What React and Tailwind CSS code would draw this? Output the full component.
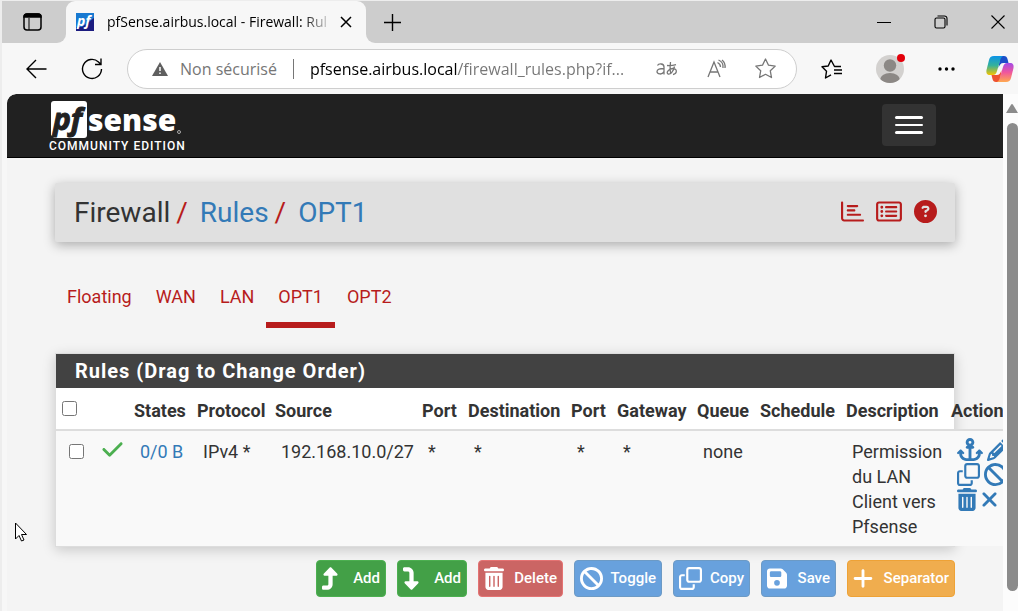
import {
  FaAnchor,
  FaBan,
  FaCheck,
  FaCircleQuestion,
  FaFloppyDisk,
  FaPencil,
  FaPlus,
  FaRegChartBar,
  FaRegClone,
  FaRegRectangleList,
  FaTrashCan,
  FaTurnDown,
  FaTurnUp,
  FaXmark,
} from 'react-icons/fa6'

const TABS = ['Floating', 'WAN', 'LAN', 'OPT1', 'OPT2']

const COLUMNS = [
  { label: 'States', width: 'w-[63px]' },
  { label: 'Protocol', width: 'w-[78px]' },
  { label: 'Source', width: 'w-[147px]' },
  { label: 'Port', width: 'w-[46px]' },
  { label: 'Destination', width: 'w-[103px]' },
  { label: 'Port', width: 'w-[46px]' },
  { label: 'Gateway', width: 'w-[80px]' },
  { label: 'Queue', width: 'w-[63px]' },
  { label: 'Schedule', width: 'w-[86px]' },
  { label: 'Description', width: 'w-[105px]' },
  { label: 'Actions', width: 'w-[72px]' },
]

const RULES = [
  {
    states: '0/0 B',
    cells: ['IPv4 *', '192.168.10.0/27', '*', '*', '*', '*', 'none', '', 'Permission du LAN Client vers Pfsense'],
  },
]

const ROW_ACTIONS = [
  { label: 'Add associated rule', Icon: FaAnchor, size: 'h-[23px] w-[26px]' },
  { label: 'Edit', Icon: FaPencil, size: 'h-[23px] w-[23px]' },
  { label: 'Copy', Icon: FaRegClone, size: 'h-[23px] w-[23px]' },
  { label: 'Disable', Icon: FaBan, size: 'h-[23px] w-[23px]' },
  { label: 'Delete', Icon: FaTrashCan, size: 'h-[23px] w-5' },
  { label: 'Reset states', Icon: FaXmark, size: 'h-[23px] w-[17px]' },
]

const GREEN = 'bg-[#43a047] border-[#4caf50]'
const RED = 'bg-[#cb6564] border-[#e57373]'
const BLUE = 'bg-[#68a1dd] border-[#6c9ac5]'
const ORANGE = 'bg-[#f0ad4e] border-[#eea236]'

const BUTTONS = [
  { label: 'Add', Icon: FaTurnUp, size: 'h-[23px] w-[17px]', width: 'w-[70px]', color: GREEN },
  { label: 'Add', Icon: FaTurnDown, size: 'h-[23px] w-[17px]', width: 'w-[70px]', color: GREEN },
  { label: 'Delete', Icon: FaTrashCan, size: 'h-[23px] w-5', width: 'w-[85px]', color: RED },
  { label: 'Toggle', Icon: FaBan, size: 'h-[23px] w-[23px]', width: 'w-[88px]', color: BLUE },
  { label: 'Copy', Icon: FaRegClone, size: 'h-[23px] w-[23px]', width: 'w-[77px]', color: BLUE },
  { label: 'Save', Icon: FaFloppyDisk, size: 'h-[23px] w-5', width: 'w-[75px]', color: BLUE },
  { label: 'Separator', Icon: FaPlus, size: 'h-[23px] w-5', width: 'w-[108px]', color: ORANGE },
]

function TabBar() {
  return (
    <div className="flex h-[42px] shrink-0 bg-[linear-gradient(#cdcdcd_50%,#f7f7f7_50%)] text-black">
      <div className="flex w-16 rounded-br-[9px] bg-[#cdcdcd]">
        <button aria-label="Tab actions" className="flex w-[60px] items-center justify-center">
          <svg className="h-[18px] w-[19px]" viewBox="0 0 19 18" fill="none" stroke="currentColor" strokeWidth="1.5">
            <rect x="1" y="1" width="17" height="16" rx="3" />
            <path d="M1 4a3 3 0 0 1 3-3h11a3 3 0 0 1 3 3H1z" fill="currentColor" />
            <path d="M6 5v12" strokeWidth="1" />
          </svg>
        </button>
      </div>
      <div className="flex w-[300px] items-center rounded-t-[9px] bg-[#f7f7f7] pr-[14px] pl-[10px]">
        <svg className="h-[18px] w-[18px] shrink-0 overflow-visible" viewBox="0 0 18 18">
          <rect width="18" height="18" fill="#1c1c80" />
          <path d="M0 0h18v5L6 14H0z" fill="#1879d1" />
          <text x="1" y="13" fontFamily="Open Sans, sans-serif" fontSize="14" fontWeight="700" fontStyle="italic" fill="#fff">pf</text>
        </svg>
        <span className="ml-[13px] flex-1 text-sm whitespace-nowrap [mask-image:linear-gradient(to_right,#000_195px,transparent_226px)]">
          pfSense.airbus.local - Firewall: Rul
        </span>
        <button aria-label="Close tab">
          <svg className="h-3 w-3" viewBox="0 0 12 12" stroke="currentColor" strokeWidth="1.5">
            <path d="M1 1l10 10M11 1L1 11" />
          </svg>
        </button>
      </div>
      <div className="flex flex-1 items-center justify-between rounded-bl-[9px] bg-[#cdcdcd] pr-[13px] pl-[18px]">
        <button aria-label="New tab">
          <svg className="h-[17px] w-[17px]" viewBox="0 0 17 17" stroke="currentColor" strokeWidth="1.4">
            <path d="M8.5 0v17M0 8.5h17" />
          </svg>
        </button>
        <div className="flex items-center gap-[43px]">
          <button aria-label="Minimize">
            <svg className="h-[14px] w-[14px]" viewBox="0 0 14 14" stroke="currentColor">
              <path d="M0 7.5h14" />
            </svg>
          </button>
          <button aria-label="Restore">
            <svg className="h-[14px] w-[14px]" viewBox="0 0 14 14" fill="none" stroke="currentColor" strokeWidth="1.1">
              <rect x="1" y="3" width="10" height="10" rx="1.5" />
              <path d="M3.5 1h7A2.5 2.5 0 0 1 13 3.500v7" />
            </svg>
          </button>
          <button aria-label="Close window">
            <svg className="h-[14px] w-[14px]" viewBox="0 0 14 14" stroke="currentColor" strokeWidth="1.1">
              <path d="M.5.5l13 13M13.500.5l-13 13" />
            </svg>
          </button>
        </div>
      </div>
    </div>
  )
}

function CopilotLogo() {
  return (
    <svg className="h-7 w-7" viewBox="0 0 28 28">
      <defs>
        <linearGradient id="cpA" x1="0" y1="0" x2="0" y2="1">
          <stop offset="0" stopColor="#0a93e8" />
          <stop offset=".5" stopColor="#35b29a" />
          <stop offset="1" stopColor="#f5c400" />
        </linearGradient>
        <linearGradient id="cpB" x1="0" y1="0" x2="0" y2="1">
          <stop offset="0" stopColor="#a24be8" />
          <stop offset=".5" stopColor="#f0579c" />
          <stop offset="1" stopColor="#ffa94f" />
        </linearGradient>
      </defs>
      <path d="M14 1h4c2 0 3 1 3.500 3l1 4h-5c-3 0-4 2-5 5z" fill="#1b4fc9" />
      <path d="M14 27h-4c-2 0-3-1-3.500-3l-1-4h5c3 0 4-2 5-5z" fill="#ee5230" />
      <path d="M8 1h9c-2 1-2.500 3-3 5l-3 10c-1 3-2 4-4 4H4c-3 0-4-2-3.500-5L3 5c.7-2.500 2-4 5-4z" fill="url(#cpA)" />
      <path d="M20 27h-9c2-1 2.500-3 3-5l3-10c1-3 2-4 4-4h3c3 0 4 2 3.500 5L25 23c-.7 2.500-2 4-5 4z" fill="url(#cpB)" />
    </svg>
  )
}

function AddressBar() {
  return (
    <div className="flex h-[51px] shrink-0 items-center bg-[#f7f7f7] pr-1 pl-6 text-black">
      <button aria-label="Back">
        <svg className="h-5 w-[21px]" viewBox="0 0 21 20" fill="none" stroke="currentColor" strokeWidth="1.4">
          <path d="M20.500 10H1.500M10 1L1 10l9 9" />
        </svg>
      </button>
      <button aria-label="Refresh" className="ml-[34px]">
        <svg className="h-[22px] w-[22px]" viewBox="0 0 22 22" fill="none" stroke="currentColor" strokeWidth="1.4">
          <path d="M20.500 11a9.500 9.500 0 1 1-3-7l2 2M20 .5V6.500h-6" />
        </svg>
      </button>
      <div className="ml-6 flex h-10 flex-1 items-center rounded-full border border-[#cecece] bg-white pr-5 pl-6 text-base text-[#767676]">
        <svg className="h-[14px] w-4 shrink-0" viewBox="0 0 16 14">
          <path d="M8 0l8 14H0z" fill="#5f5f5f" />
          <path d="M8 5v4M8 10.500v1.500" stroke="#fff" strokeWidth="1.500" />
        </svg>
        <span className="ml-3 whitespace-nowrap">Non sécurisé</span>
        <span className="mx-4 h-5 w-px shrink-0 bg-[#767676]" />
        <input
          aria-label="Address"
          defaultValue="pfsense.airbus.local/firewall_rules.php?if..."
          className="min-w-0 flex-1 bg-[linear-gradient(to_right,#000_148px,#767676_148px)] bg-clip-text text-transparent outline-none"
        />
        <button aria-label="Translate" className="ml-4">
          <svg className="h-[18px] w-[22px]" viewBox="0 0 22 18" fill="none" stroke="#767676" strokeWidth="1.300">
            <path d="M1.500 5.500c1-2 6.500-2.500 6.500 1.500v7.500M8 8.500c-4 0-7 .5-7 3s5 4 7 0M11 5.500c3 .3 6 0 9-.8M14.500 2c-.6 5-.6 9 .5 12M18.500 6.500c-1 5-4 8-6.500 7.500-2-1 0-5 4.500-5.500 5-.3 5 5 .5 6" />
          </svg>
        </button>
        <button aria-label="Read aloud" className="ml-[29px]">
          <svg className="h-5 w-5" viewBox="0 0 20 20" fill="none" stroke="#767676" strokeWidth="1.300">
            <path d="M1 18L7 3l6 15M3 13h8M10.500 3.500c2 1 3 2.500 3 4.500M11.500 1c3.500 1.500 5 4.500 4.500 8M15 1c2.500 2 3.500 4.500 3 8" />
          </svg>
        </button>
        <button aria-label="Add to favourites" className="ml-7">
          <svg className="h-[21px] w-[21px]" viewBox="0 0 21 21" fill="none" stroke="#767676" strokeWidth="1.300" strokeLinejoin="round">
            <path d="M10.500 1l3 6.200 6.700.9-4.900 4.700 1.200 6.700-6-3.200-6 3.200 1.200-6.700L.8 8.100l6.700-.9z" />
          </svg>
        </button>
      </div>
      <button aria-label="Favourites" className="ml-6">
        <svg className="h-5 w-[22px]" viewBox="0 0 22 20" fill="none" stroke="currentColor" strokeWidth="1.400" strokeLinejoin="round">
          <path d="M20 7.500h-6.500L10 1 7.200 7 1 7.800l4.500 4.500L4.500 19l5.500-3.200M13 11h8M13 14.500h8" />
        </svg>
      </button>
      <button aria-label="Profile" className="relative ml-[33px]">
        <svg className="h-7 w-7" viewBox="0 0 28 28">
          <clipPath id="avatarClip"><circle cx="14" cy="14" r="14" /></clipPath>
          <g clipPath="url(#avatarClip)">
            <rect width="28" height="28" fill="#d3d1cf" />
            <circle cx="14" cy="10.500" r="6.200" fill="#8c8885" />
            <ellipse cx="14" cy="25" rx="10" ry="7" fill="#8c8885" />
          </g>
        </svg>
        <span className="absolute -top-px -right-px h-2 w-2 rounded-full bg-[#e3000b]" />
      </button>
      <button aria-label="Settings" className="ml-[34px]">
        <svg className="h-1 w-[17px]" viewBox="0 0 17 4" fill="currentColor">
          <circle cx="2" cy="2" r="1.700" />
          <circle cx="8.500" cy="2" r="1.700" />
          <circle cx="15" cy="2" r="1.700" />
        </svg>
      </button>
      <button aria-label="Copilot" className="ml-[31px]">
        <CopilotLogo />
      </button>
    </div>
  )
}

function Navbar() {
  return (
    <header className="flex h-16 items-center justify-between rounded-tl-[9px] border-b border-black bg-[#212121] pr-[67px] pb-[2px] pl-[42px]">
      <a href="#" className="flex flex-col pt-[5px] text-white">
        <svg className="h-[37px] w-[133px] overflow-visible" viewBox="0 0 133 37">
          <path d="M5 0h30a3 3 0 0 1 3 3v31a3 3 0 0 1-3 3H5l-3-3V3a3 3 0 0 1 3-3z" fill="#fff" />
          <text x="4" y="29" fontFamily="Open Sans, sans-serif" fontSize="30" fontWeight="700" fontStyle="italic" fill="#212121" stroke="#212121">pf</text>
          <text x="39" y="30" fontFamily="Open Sans, sans-serif" fontSize="30" fontWeight="800" fill="#fff">sense</text>
          <circle cx="130" cy="31" r="1.500" fill="none" stroke="#aaa" />
        </svg>
        <span className="text-xs leading-4 font-medium tracking-[1px]">COMMUNITY EDITION</span>
      </a>
      <button aria-label="Toggle navigation" className="flex h-[42px] w-[54px] flex-col items-center justify-center gap-[5px] rounded bg-[#333]">
        <span className="h-[3px] w-7 rounded-xs bg-white" />
        <span className="h-[2px] w-7 rounded-xs bg-white" />
        <span className="h-[3px] w-7 rounded-xs bg-white" />
      </button>
    </header>
  )
}

function Breadcrumb() {
  return (
    <div className="flex h-[59px] items-center justify-between rounded-xs bg-[#e0e0e0] pr-[18px] pl-[19px] shadow-[0_3px_12px_rgba(0,0,0,0.3)]">
      <nav className="flex text-[28px] text-[#333]">
        <span>Firewall</span>
        <span className="mr-3 ml-[6px] text-[#b71c1c]">/</span>
        <a href="#" className="text-[#337ab7]">Rules</a>
        <span className="mr-3 ml-[6px] text-[#b71c1c]">/</span>
        <a href="#" className="text-[#337ab7]">OPT1</a>
      </nav>
      <div className="flex items-center gap-3 pb-[2px] text-[#b71c1c]">
        <a href="#" aria-label="Status"><FaRegChartBar className="h-[23px] w-[23px]" /></a>
        <a href="#" aria-label="Logs"><FaRegRectangleList className="h-[23px] w-[26px]" /></a>
        <a href="#" aria-label="Help"><FaCircleQuestion className="h-[23px] w-[23px]" /></a>
      </div>
    </div>
  )
}

function RulesTable() {
  return (
    <section className="border border-[#ddd] bg-white shadow-[0_3px_12px_rgba(0,0,0,0.18)]">
      <h2 className="h-[34px] bg-[#424242] px-[19px] text-xl leading-[34px] font-bold tracking-[1px] text-white">
        Rules (Drag to Change Order)
      </h2>
      <table className="w-[961px] min-w-full table-fixed text-left text-lg leading-[25px] text-[#333]">
        <thead>
          <tr className="h-[42px] border-b-2 border-[#ddd]">
            <th className="w-[34px] pl-[6px] align-middle">
              <input type="checkbox" aria-label="Select all rules" className="block h-[15px] w-[15px]" />
            </th>
            <th className="w-[38px]" />
            {COLUMNS.map((col, i) => (
              <th key={i} className={`${col.width} pt-1 pl-[6px] font-bold whitespace-nowrap`}>
                {col.label}
              </th>
            ))}
          </tr>
        </thead>
        <tbody>
          {RULES.map((rule, i) => (
            <tr key={i} className="bg-[#f9f9f9] align-top">
              <td className="py-[13px] pl-[13px]">
                <input type="checkbox" aria-label={`Select rule ${i + 1}`} className="block h-[15px] w-[15px]" />
              </td>
              <td className="py-[7px] pl-3">
                <FaCheck className="h-[23px] w-[21px] text-[#4caf50]" />
              </td>
              <td className="py-2 pl-3">
                <a href="#" className="text-[#337ab7]">{rule.states}</a>
              </td>
              {rule.cells.map((cell, j) => (
                <td key={j} className="pt-2 pb-[7px] pl-3">{cell}</td>
              ))}
              <td className="py-[7px] pl-3">
                <div className="flex flex-wrap gap-x-1 gap-y-[2px] text-[#337ab7]">
                  {ROW_ACTIONS.map(({ label, Icon, size }) => (
                    <a key={label} href="#" aria-label={label}><Icon className={size} /></a>
                  ))}
                </div>
              </td>
            </tr>
          ))}
        </tbody>
      </table>
    </section>
  )
}

function Scrollbar() {
  return (
    <div className="flex w-[15px] shrink-0 flex-col items-end bg-[#fcfcfc] pt-[10px] pb-5">
      <svg className="h-[9px] w-3" viewBox="0 0 12 9" fill="#8b8b8b">
        <path d="M5 .8a1.200 1.200 0 0 1 2 0l5 8.200H0z" />
      </svg>
      <div className="mt-[10px] w-[11px] flex-1 rounded-full bg-[#8b8b8b]" />
    </div>
  )
}

export default function App() {
  return (
    <div className="flex h-screen flex-col overflow-hidden border-t border-l-2 border-[#ededed] bg-[#f7f7f7] font-['Open_Sans','Noto_Sans',sans-serif]">
      <TabBar />
      <AddressBar />
      <div className="flex min-h-0 flex-1 pl-[5px] font-[Roboto,sans-serif]">
        <div className="min-w-0 flex-1 overflow-hidden rounded-tl-[9px] bg-[#f4f4f4]">
          <Navbar />
          <main className="px-12 pt-[25px]">
            <Breadcrumb />
            <nav className="mt-9 flex text-lg leading-[38px] text-[#b71c1c]">
              {TABS.map((tab) => (
                <a
                  key={tab}
                  href="#"
                  className={`border-b-6 px-3 pb-[6px] ${tab === 'OPT1' ? 'border-[#b71c1c]' : 'border-transparent'}`}
                >
                  {tab}
                </a>
              ))}
            </nav>
            <div className="mt-[25px]">
              <RulesTable />
            </div>
            <div className="mt-[13px] flex justify-end gap-[11px]">
              {BUTTONS.map(({ label, Icon, size, width, color }, i) => (
                <button
                  key={i}
                  className={`flex h-[37px] items-center justify-between rounded border pr-[5px] pl-[5px] text-[15px] font-medium text-white ${width} ${color}`}
                >
                  <Icon className={size} />
                  {label}
                </button>
              ))}
            </div>
          </main>
        </div>
        <Scrollbar />
      </div>
      <svg className="pointer-events-none absolute top-[522px] left-[15px] h-5 w-3" viewBox="0 0 12 20" fill="#fff" stroke="#000">
        <path d="M.5 1v16l3.500-3.500 2.500 5.500 2.500-1-2.500-5.500h5z" />
      </svg>
    </div>
  )
}
